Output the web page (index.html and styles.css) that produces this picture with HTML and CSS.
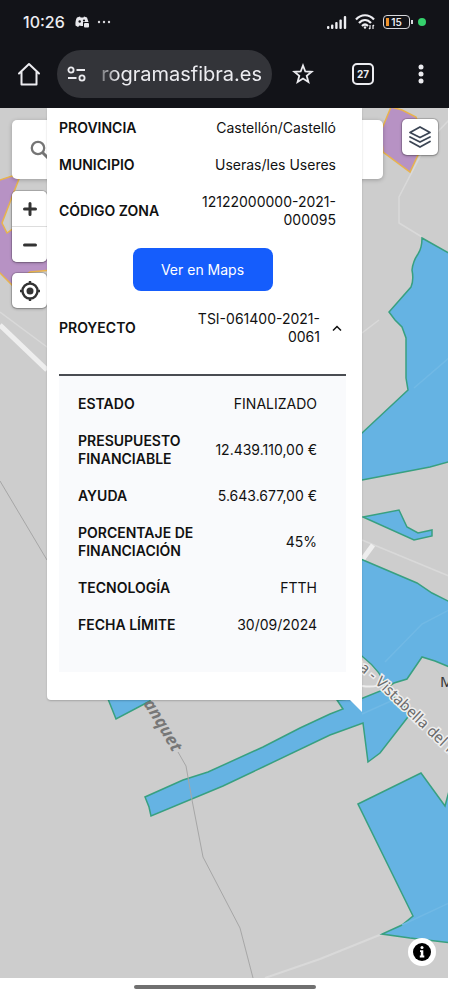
FILE: index.html
```html
<!DOCTYPE html>
<html lang="es">
<head>
<meta charset="utf-8">
<meta name="viewport" content="width=device-width, initial-scale=1">
<title>programasfibra.es</title>
<link rel="stylesheet" href="styles.css">
</head>
<body>
<header class="chrome">
  <div class="status">
    <span class="clock">10:26</span>
    <svg class="discord" width="14" height="12" viewBox="0 0 14 12" aria-hidden="true"><path fill="#e8e8ec" d="M2 1.500 5 .5 5.600 1.500h2.800L9 .5l3 1 1.500 4.500H8v4H6L4.600 9.500 3 11 .5 9.500C.2 6 .8 3.500 2 1.500Z"/><circle cx="4.700" cy="5.500" r="1.200" fill="#121318"/><circle cx="9" cy="4.500" r="1.100" fill="#121318"/><rect x="9" y="7" width="5" height="4.500" rx="1" fill="#e8e8ec"/></svg>
    <svg width="14" height="4" viewBox="0 0 14 4" fill="#d8d8dc" aria-hidden="true"><circle cx="2" cy="2" r="1.200"/><circle cx="7" cy="2" r="1.200"/><circle cx="12" cy="2" r="1.200"/></svg>
    <span class="spacer"></span>
    <svg width="20" height="13" viewBox="0 0 20 13" fill="#eeeef2" aria-hidden="true"><rect x="0" y="10" width="2.400" height="3" rx="1"/><rect x="4" y="8.500" width="2.400" height="4.500" rx="1"/><rect x="8.200" y="6" width="2.400" height="7" rx="1"/><rect x="12.400" y="3.500" width="2.400" height="9.500" rx="1"/><rect x="16.800" y="0" width="2.400" height="13" rx="1"/></svg>
    <svg width="20" height="16" viewBox="0 0 20 16" fill="none" stroke="#eeeef2" stroke-width="2.200" aria-hidden="true"><path d="M1 5.500C6-.2 14-.2 19 5.500M4 9c3.500-4 8.500-4 12 0M7 12c2-2 4-2 6 0"/><circle cx="10" cy="13.500" r="1.200" fill="#eeeef2" stroke="none"/><path stroke-width="1.200" d="M15 11v4m-1-1 1 1M18 15v-4m1 1-1-1"/></svg>
    <span class="battery">15</span>
    <span class="recording"></span>
  </div>
  <div class="toolbar">
    <button class="icon-btn" aria-label="Inicio"><svg width="24" height="24" viewBox="0 0 24 24" fill="none" stroke="#ececf0" stroke-width="2" stroke-linejoin="round" stroke-linecap="round"><path d="M2 11.500 12 2l10 9.500M4.500 10v12.500h15V10"/></svg></button>
    <div class="omnibox">
      <svg width="20" height="16" viewBox="0 0 20 16" fill="none" stroke="#ececf0" stroke-width="1.800" aria-hidden="true"><circle cx="4" cy="4" r="2.600"/><path d="M9.500 4H18M1 12h8.500"/><circle cx="15" cy="12" r="2.600"/></svg>
      <input class="url" type="text" aria-label="Dirección" value="rogramasfibra.es">
    </div>
    <button class="icon-btn star" aria-label="Favorito"><svg width="22" height="22" viewBox="0 0 22 22" fill="none" stroke="#ececf0" stroke-width="1.800"><path d="m11 2.500 2.300 6 6.400.3-5 4 1.700 6.200-5.400-3.500L5.600 19l1.700-6.200-5-4 6.400-.3Z"/></svg></button>
    <button class="tabs" aria-label="Pestañas">27</button>
    <button class="icon-btn" aria-label="Menú"><svg width="6" height="20" viewBox="0 0 6 20" fill="#ececf0"><circle cx="3" cy="3" r="2.500"/><circle cx="3" cy="10" r="2.500"/><circle cx="3" cy="17" r="2.500"/></svg></button>
  </div>
</header>

<main class="map">
  <svg class="canvas" viewBox="0 108 448 870" preserveAspectRatio="xMinYMin slice" aria-hidden="true">
    <g fill="none" stroke="#d9d9d9" stroke-width="1.500">
      <path d="M449 120 427 143 399 197V223L422 237M0 312 47 347M362 333 379 320M362 540 449 576"/>
      <path d="M265 978 320 959 382 934" stroke-width="2"/>
      <path d="M0 325 47 370M362 560 373 545" stroke="#eeeeee" stroke-width="5"/>
      <path d="M362 686q14 2 22-3" stroke="#eeeeee" stroke-width="2"/>
    </g>
    <path class="stream" d="M0 481 47 560"/>
    <g class="purple">
      <path d="M-3 181 12 176 19 179 2 223 7 233 14 228 52 225V270L30 272 12 285-3 270Z"/>
      <path d="M391 107 402 110 416 117 424 140 418 155 410 172 383 152 381 131Z"/>
    </g>
    <g class="blue">
      <path d="M422 238 452 255V461L430 467 362 480 340 484V452L362 433 408 390 406 378V338L402 327 395 320 389 312 411 287Q414 280 412 270 413 261 418 254 422 248 422 238Z"/>
      <path d="M363 517 399 510 407 527 418 533 432 530V536L414 540Z"/>
      <path d="M355 557 363 560 417 583 432 593 452 603V668L435 661 422 657 407 679 394 683 386 688Q382 672 363 657L355 650Z"/>
      <path d="M337 700 343 709 330 714 300 728 263 747 208 772 183 780 145 797 149 807 151 816 223 786 263 767 330 735 363 723 368 762 380 753 411 713 394 697 385 689 363 698Z"/>
      <path d="M108 699 116 719 150 701V690H108Z"/>
      <path d="M358 804 421 773 445 806 452 780V943L410 938 382 934 402 925 413 916Z"/>
    </g>
    <path class="stream" d="M178 752 186 766 192 800 203 857 240 928 253 978"/>
    <path d="M402 925 449 903M362 714 400 697M385 662 422 624 449 610M414 388 449 358" fill="none" stroke="#71b9e5" stroke-width="1.500"/>
    <path id="road" d="M347 661Q368 676 384 692T446 751L478 778" fill="none"/>
    <text class="road-label"><textPath href="#road">ma - Vistabella del Maestrat</textPath></text>
    <path id="river" d="M143 704Q158 726 175 757" fill="none"/>
    <text class="river-label"><textPath href="#river">anquet</textPath></text>
    <text class="place" x="440" y="687">M</text>
  </svg>

  <label class="search">
    <svg width="20" height="20" viewBox="0 0 20 20" fill="none" stroke="#757575" stroke-width="2.300" aria-hidden="true"><circle cx="8" cy="8" r="6.200"/><path d="m12.500 12.500 6 6" stroke-width="3"/></svg>
    <input type="search" aria-label="Buscar">
  </label>

  <div class="controls">
    <div class="zoom">
      <button class="ctl" aria-label="Acercar"><svg width="16" height="16" viewBox="0 0 16 16" stroke="#333" stroke-width="3" stroke-linecap="round"><path d="M8 2.500v11M2.500 8h11"/></svg></button>
      <button class="ctl" aria-label="Alejar"><svg width="16" height="16" viewBox="0 0 16 16" stroke="#333" stroke-width="3" stroke-linecap="round"><path d="M2.500 8h11"/></svg></button>
    </div>
    <button class="ctl locate" aria-label="Mi ubicación"><svg width="22" height="22" viewBox="0 0 22 22" fill="none" stroke="#333" stroke-width="2.400"><circle cx="11" cy="11" r="7.500"/><circle cx="11" cy="11" r="3.500" fill="#333" stroke="none"/><path d="M11 1v3M11 18v3M1 11h3M18 11h3"/></svg></button>
  </div>

  <button class="ctl layers" aria-label="Capas"><svg width="24" height="24" viewBox="0 0 24 24" fill="none" stroke="#3b4554" stroke-width="1.800" stroke-linejoin="round" stroke-linecap="round"><path d="M12 2 22 7.500 12 12.500 2 7.500ZM2 12 12 17l10-5M2 16.500 12 22l10-5.500"/></svg></button>

  <section class="popup">
    <dl class="rows">
      <div class="row"><dt>PROVINCIA</dt><dd>Castellón/Castelló</dd></div>
      <div class="row"><dt>MUNICIPIO</dt><dd>Useras/les Useres</dd></div>
      <div class="row"><dt>CÓDIGO ZONA</dt><dd>12122000000-2021-000095</dd></div>
    </dl>
    <a class="maps-link" href="#">Ver en Maps</a>
    <button class="project" aria-expanded="true" aria-controls="detail">
      <strong>PROYECTO</strong><span class="project-code">TSI-061400-2021-0061</span>
      <svg width="10" height="6" viewBox="0 0 10 6" fill="none" stroke="#111" stroke-width="1.500" aria-hidden="true"><path d="m1 5.500 4-4 4 4"/></svg>
    </button>
    <dl class="rows detail" id="detail">
      <div class="row"><dt>ESTADO</dt><dd>FINALIZADO</dd></div>
      <div class="row"><dt>PRESUPUESTO FINANCIABLE</dt><dd>12.439.110,00 €</dd></div>
      <div class="row"><dt>AYUDA</dt><dd>5.643.677,00 €</dd></div>
      <div class="row"><dt>PORCENTAJE DE FINANCIACIÓN</dt><dd>45%</dd></div>
      <div class="row"><dt>TECNOLOGÍA</dt><dd>FTTH</dd></div>
      <div class="row"><dt>FECHA LÍMITE</dt><dd>30/09/2024</dd></div>
    </dl>
  </section>

  <button class="info" aria-label="Información"><svg width="18" height="18" viewBox="0 0 18 18"><circle cx="9" cy="9" r="9"/><circle cx="9" cy="4.500" r="1.500" fill="#fff"/><path fill="#fff" d="M7 7.200h3.300v5.400h1V14.500H6.800v-1.900h1V9H7Z"/></svg></button>
</main>
<footer class="gesture"><span class="handle"></span></footer>
</body>
</html>
```
FILE: styles.css
```css
* { box-sizing: border-box; }
body {
  margin: 0;
  min-height: 100vh;
  display: flex;
  flex-direction: column;
  background: #fff;
  color: #111;
  font: 14px/18px Inter, "Liberation Sans", sans-serif;
}
button, input { font: inherit; color: inherit; border: 0; padding: 0; background: none; }
svg { display: block; flex: none; }

.chrome { background: #121318; color: #ececf0; padding-bottom: 10px; }
.status {
  display: flex;
  align-items: center;
  gap: 8px;
  height: 50px;
  padding: 0 23px 6px;
}
.clock { font-size: 16px; font-weight: 500; }
.status .discord { margin-left: 2px; }
.spacer { flex: 1; }
.battery {
  position: relative;
  width: 27px;
  height: 14px;
  border: 1px solid #d8d8dc;
  border-radius: 4px;
  font-size: 10px;
  font-weight: 600;
  line-height: 12px;
  text-align: center;
}
.battery::before {
  content: "";
  position: absolute;
  left: 2px;
  top: 2px;
  width: 3px;
  height: 8px;
  background: #f0932b;
}
.battery::after {
  content: "";
  position: absolute;
  right: -4px;
  top: 4px;
  width: 2px;
  height: 4px;
  background: #d8d8dc;
}
.recording { width: 8px; height: 8px; border-radius: 50%; background: #35d16c; }

.toolbar { display: flex; align-items: center; height: 48px; }
.icon-btn { width: 57px; height: 48px; display: grid; place-items: center; }
.omnibox {
  flex: 1;
  min-width: 0;
  height: 48px;
  display: flex;
  align-items: center;
  gap: 8px;
  padding: 0 10px;
  border-radius: 24px;
  background: #333439;
}
.url {
  flex: 1;
  min-width: 0;
  height: 32px;
  font-size: 20px;
  text-align: right;
  mask-image: linear-gradient(to right, rgba(0, 0, 0, .2), #000 24px);
}
.star { width: 62px; }
.tabs {
  width: 22px;
  height: 22px;
  margin: 0 18px;
  border: 2px solid #ececf0;
  border-radius: 5px;
  font-size: 10px;
  font-weight: 700;
  line-height: 18px;
}

.map {
  position: relative;
  flex: 1;
  overflow: hidden;
  margin-right: 1px;
  background: #cdcdcd;
}
.canvas { position: absolute; inset: 0; width: 100%; height: 100%; }
.blue { fill: #65b3e3; stroke: #38a080; stroke-width: 1.5px; }
.purple { fill: #b792c4; stroke: #e8b34d; stroke-width: 1.5px; }
.stream { fill: none; stroke: #a6a6a6; stroke-width: 1px; }
.road-label, .river-label, .place { font-family: "Noto Sans", sans-serif; }
.road-label { font-size: 15px; fill: #6b6b6b; stroke: #eee; stroke-width: 3px; paint-order: stroke; }
.river-label { font-size: 17px; font-style: italic; font-weight: 700; fill: #777; }
.place { font-size: 15px; fill: #333; }

.search {
  position: absolute;
  top: 12px;
  left: 12px;
  right: 65px;
  height: 59px;
  display: flex;
  align-items: center;
  gap: 12px;
  padding: 0 18px;
  border-radius: 5px;
  background: #fff;
  box-shadow: 0 1px 4px rgba(0, 0, 0, .25);
}
.search input { flex: 1; min-width: 0; outline: 0; }
.controls { position: absolute; top: 83px; left: 12px; display: grid; gap: 11px; }
.zoom { display: grid; gap: 1px; border-radius: 5px; background: #ddd; box-shadow: 0 0 0 1px rgba(0, 0, 0, .15), 0 1px 3px rgba(0, 0, 0, .3); overflow: hidden; }
.ctl { display: grid; place-items: center; width: 35px; height: 35px; background: #fff; }
.locate, .layers { border-radius: 5px; box-shadow: 0 0 0 1px rgba(0, 0, 0, .15), 0 1px 3px rgba(0, 0, 0, .3); }
.layers { position: absolute; top: 11px; right: 10px; width: 36px; height: 36px; }

.popup {
  position: relative;
  margin: 0 86px 0 47px;
  padding: 11px 16px 28px 12px;
  border-bottom-left-radius: 4px;
  background: #fff;
  box-shadow: 0 1px 2px rgba(0, 0, 0, .2);
}
.popup::after {
  content: "";
  position: absolute;
  top: 100%;
  right: 0;
  width: 12px;
  height: 12px;
  background: #fff;
  clip-path: polygon(0 0, 100% 0, 100% 100%);
}
.rows { display: grid; gap: 19px; margin: 0; padding-right: 10px; }
.row { display: grid; grid-template-columns: 1fr 1fr; align-items: center; }
dt, .project strong { font-weight: 600; }
dd { margin: 0; text-align: right; }
.maps-link {
  display: block;
  width: 140px;
  margin: 19px auto;
  border-radius: 8px;
  background: #155dfc;
  color: #fff;
  line-height: 43px;
  text-align: center;
  text-decoration: none;
}
.project {
  display: grid;
  grid-template-columns: 1fr 1fr 10px;
  align-items: center;
  width: 100%;
  padding: 0 4px 28px 0;
  border-bottom: 2px solid #4a4d52;
  text-align: left;
}
.project-code { padding-right: 12px; text-align: right; }
.detail { padding: 19px 29px 38px 19px; background: #f9fafc; }

.info {
  position: absolute;
  right: 12px;
  bottom: 12px;
  display: grid;
  place-items: center;
  width: 28px;
  height: 28px;
  border-radius: 50%;
  background: #fff;
}
.gesture { display: flex; justify-content: center; height: 20px; padding-top: 7px; }
.handle { width: 182px; height: 4px; border-radius: 2px; background: #707070; }
```
